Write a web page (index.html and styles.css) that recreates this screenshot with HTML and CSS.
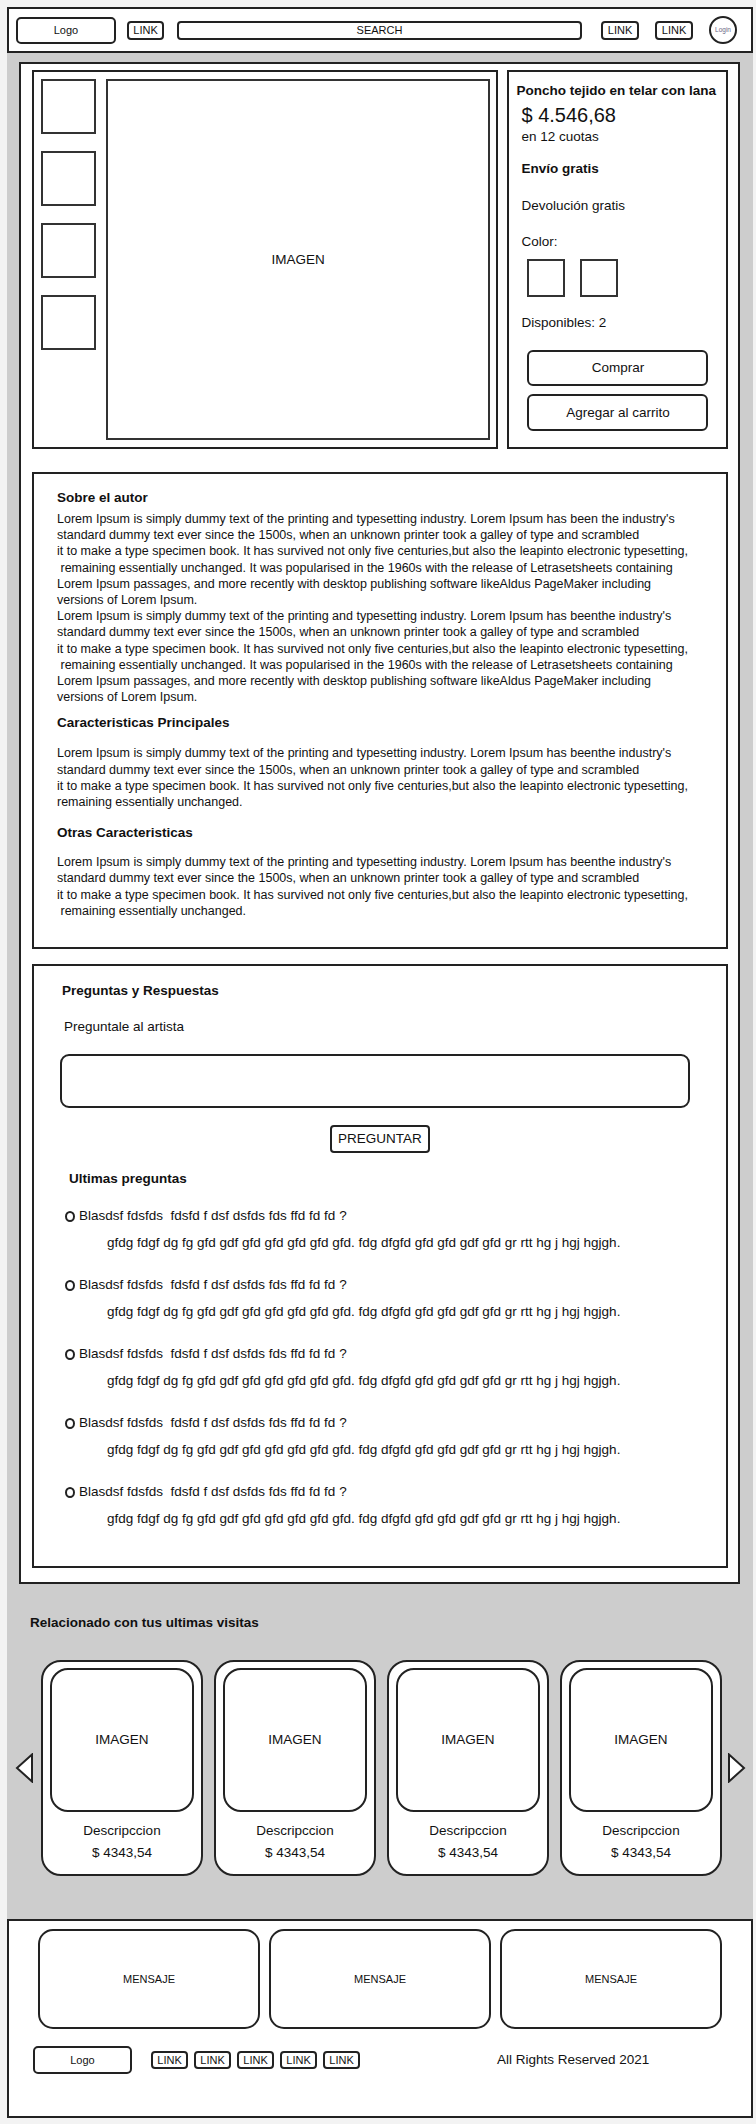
FILE: index.html
```html
<!DOCTYPE html>
<html lang="es">
<head>
<meta charset="utf-8">
<title>Poncho tejido en telar con lana</title>
<link rel="stylesheet" href="styles.css">
</head>
<body>
<div class="page">
  <header class="header">
    <div class="box logo">Logo</div>
    <div class="box hlink first">LINK</div>
    <div class="box search">SEARCH</div>
    <div class="box hlink">LINK</div>
    <div class="box hlink">LINK</div>
    <div class="login">Login</div>
  </header>

  <main class="main">
    <div class="wrapper">
      <section class="product-row">
        <div class="gallery">
          <div class="thumbs">
            <div class="thumb"></div>
            <div class="thumb"></div>
            <div class="thumb"></div>
            <div class="thumb"></div>
          </div>
          <div class="main-image">IMAGEN</div>
        </div>
        <div class="info">
          <div class="title">Poncho tejido en telar con lana</div>
          <div class="price">$ 4.546,68</div>
          <div class="cuotas">en 12 cuotas</div>
          <div class="envio">Envío gratis</div>
          <div class="devol">Devolución gratis</div>
          <div class="color-label">Color:</div>
          <div class="swatches">
            <div class="swatch"></div>
            <div class="swatch"></div>
          </div>
          <div class="stock">Disponibles: 2</div>
          <div class="btn buy">Comprar</div>
          <div class="btn cart">Agregar al carrito</div>
        </div>
      </section>

      <section class="desc">
        <div class="h h-first">Sobre el autor</div>
        <p class="body body-first">Lorem Ipsum is simply dummy text of the printing and typesetting industry. Lorem Ipsum has been the industry's<br>standard dummy text ever since the 1500s, when an unknown printer took a galley of type and scrambled<br>it to make a type specimen book. It has survived not only five centuries,but also the leapinto electronic typesetting,<br>&nbsp;remaining essentially unchanged. It was popularised in the 1960s with the release of Letrasetsheets containing<br>Lorem Ipsum passages, and more recently with desktop publishing software likeAldus PageMaker including<br>versions of Lorem Ipsum.<br>Lorem Ipsum is simply dummy text of the printing and typesetting industry. Lorem Ipsum has beenthe industry's<br>standard dummy text ever since the 1500s, when an unknown printer took a galley of type and scrambled<br>it to make a type specimen book. It has survived not only five centuries,but also the leapinto electronic typesetting,<br>&nbsp;remaining essentially unchanged. It was popularised in the 1960s with the release of Letrasetsheets containing<br>Lorem Ipsum passages, and more recently with desktop publishing software likeAldus PageMaker including<br>versions of Lorem Ipsum.</p>
        <div class="h h-second">Caracteristicas Principales</div>
        <p class="body body-second">Lorem Ipsum is simply dummy text of the printing and typesetting industry. Lorem Ipsum has beenthe industry's<br>standard dummy text ever since the 1500s, when an unknown printer took a galley of type and scrambled<br>it to make a type specimen book. It has survived not only five centuries,but also the leapinto electronic typesetting,<br>remaining essentially unchanged.</p>
        <div class="h h-third">Otras Caracteristicas</div>
        <p class="body body-third">Lorem Ipsum is simply dummy text of the printing and typesetting industry. Lorem Ipsum has beenthe industry's<br>standard dummy text ever since the 1500s, when an unknown printer took a galley of type and scrambled<br>it to make a type specimen book. It has survived not only five centuries,but also the leapinto electronic typesetting,<br>&nbsp;remaining essentially unchanged.</p>
      </section>

      <section class="qa">
        <div class="qa-title">Preguntas y Respuestas</div>
        <div class="qa-ask">Preguntale al artista</div>
        <div class="qa-input"></div>
        <div class="qa-btn">PREGUNTAR</div>
        <div class="qa-last">Ultimas preguntas</div>
        <div class="qa-list">
          <div class="q"><span class="dot"></span>Blasdsf fdsfds  fdsfd f dsf dsfds fds ffd fd fd ?</div>
          <div class="a">gfdg fdgf dg fg gfd gdf gfd gfd gfd gfd gfd. fdg dfgfd gfd gfd gdf gfd gr rtt hg j hgj hgjgh.</div>
          <div class="q"><span class="dot"></span>Blasdsf fdsfds  fdsfd f dsf dsfds fds ffd fd fd ?</div>
          <div class="a">gfdg fdgf dg fg gfd gdf gfd gfd gfd gfd gfd. fdg dfgfd gfd gfd gdf gfd gr rtt hg j hgj hgjgh.</div>
          <div class="q"><span class="dot"></span>Blasdsf fdsfds  fdsfd f dsf dsfds fds ffd fd fd ?</div>
          <div class="a">gfdg fdgf dg fg gfd gdf gfd gfd gfd gfd gfd. fdg dfgfd gfd gfd gdf gfd gr rtt hg j hgj hgjgh.</div>
          <div class="q"><span class="dot"></span>Blasdsf fdsfds  fdsfd f dsf dsfds fds ffd fd fd ?</div>
          <div class="a">gfdg fdgf dg fg gfd gdf gfd gfd gfd gfd gfd. fdg dfgfd gfd gfd gdf gfd gr rtt hg j hgj hgjgh.</div>
          <div class="q"><span class="dot"></span>Blasdsf fdsfds  fdsfd f dsf dsfds fds ffd fd fd ?</div>
          <div class="a">gfdg fdgf dg fg gfd gdf gfd gfd gfd gfd gfd. fdg dfgfd gfd gfd gdf gfd gr rtt hg j hgj hgjgh.</div>
        </div>
      </section>
    </div>

    <section class="related">
      <div class="related-title">Relacionado con tus ultimas visitas</div>
      <div class="carousel">
        <svg class="arrow" viewBox="0 0 19 30" width="19" height="30"><polygon points="17,1.5 17,28.5 2,15" fill="#fff" stroke="#222" stroke-width="2" stroke-linejoin="miter"/></svg>
        <div class="cards">
          <div class="card"><div class="card-img">IMAGEN</div><div class="card-desc">Descripccion</div><div class="card-price">$ 4343,54</div></div>
          <div class="card"><div class="card-img">IMAGEN</div><div class="card-desc">Descripccion</div><div class="card-price">$ 4343,54</div></div>
          <div class="card"><div class="card-img">IMAGEN</div><div class="card-desc">Descripccion</div><div class="card-price">$ 4343,54</div></div>
          <div class="card"><div class="card-img">IMAGEN</div><div class="card-desc">Descripccion</div><div class="card-price">$ 4343,54</div></div>
        </div>
        <svg class="arrow" viewBox="0 0 19 30" width="19" height="30"><polygon points="2,1.5 2,28.5 17,15" fill="#fff" stroke="#222" stroke-width="2" stroke-linejoin="miter"/></svg>
      </div>
    </section>
  </main>

  <footer class="footer">
    <div class="messages">
      <div class="msg">MENSAJE</div>
      <div class="msg">MENSAJE</div>
      <div class="msg">MENSAJE</div>
    </div>
    <div class="foot-row">
      <div class="box flogo">Logo</div>
      <div class="flinks">
        <div class="box flink">LINK</div>
        <div class="box flink">LINK</div>
        <div class="box flink">LINK</div>
        <div class="box flink">LINK</div>
        <div class="box flink">LINK</div>
      </div>
      <div class="rights">All Rights Reserved 2021</div>
    </div>
  </footer>
</div>
</body>
</html>
```

FILE: styles.css
```css
* { box-sizing: border-box; }

html, body {
  margin: 0;
  padding: 0;
}

body {
  background: #f3f3f3;
  font-family: "Liberation Sans", Arial, sans-serif;
  color: #111;
  font-size: 13.5px;
  line-height: 16px;
}

.page {
  width: 746px;
  margin: 7px 0 0 7px;
}

/* ---------- header ---------- */
.header {
  height: 46px;
  background: #fff;
  border: 2px solid #222;
  display: flex;
  align-items: center;
  padding-left: 7px;
}

.box {
  border: 2px solid #222;
  border-radius: 4px;
  background: #fff;
  display: flex;
  align-items: center;
  justify-content: center;
  font-size: 11px;
  line-height: 12px;
}

.logo {
  width: 100px;
  height: 27px;
  margin-right: 11px;
  border-radius: 5px;
}

.hlink {
  width: 38px;
  height: 19px;
  margin-right: 16px;
}

.hlink.first {
  width: 37px;
  margin-right: 13px;
}

.search {
  width: 405px;
  height: 19px;
  margin-right: 19px;
}

.login {
  width: 28px;
  height: 28px;
  border: 2px solid #222;
  border-radius: 50%;
  font-size: 6.5px;
  color: #6c6888;
  display: flex;
  align-items: center;
  justify-content: center;
}

/* ---------- main gray area ---------- */
.main {
  background: #cdcdcd;
  padding: 9px 13px 43px 12px;
}

.wrapper {
  background: #fff;
  border: 2px solid #222;
  padding: 6px 10px 14px 11px;
}

/* product */
.product-row {
  display: flex;
  gap: 9px;
}

.gallery {
  width: 470px;
  border: 2px solid #222;
  padding: 7px 6px 7px 7px;
  display: flex;
  gap: 10px;
}

.thumbs {
  display: flex;
  flex-direction: column;
  gap: 17px;
}

.thumb {
  width: 55px;
  height: 55px;
  border: 2px solid #333;
}

.main-image {
  flex: 1;
  height: 361px;
  border: 2px solid #333;
  display: flex;
  align-items: center;
  justify-content: center;
}

.info {
  flex: 1;
  border: 2px solid #222;
  padding: 11px 10px 0 12px;
}

.title {
  font-weight: bold;
  margin-left: -5px;
  white-space: nowrap;
}

.price {
  font-size: 20px;
  line-height: 23px;
  margin-top: 5px;
}

.cuotas {
  margin-top: 2px;
}

.envio {
  font-weight: bold;
  margin-top: 16px;
}

.devol {
  margin-top: 21px;
}

.color-label {
  margin-top: 20px;
}

.swatches {
  display: flex;
  gap: 15px;
  margin-top: 9px;
  margin-left: 6px;
}

.swatch {
  width: 38px;
  height: 38px;
  border: 2px solid #333;
}

.stock {
  margin-top: 18px;
}

.btn {
  width: 181px;
  margin-left: 6px;
  border: 2px solid #222;
  border-radius: 6px;
  display: flex;
  align-items: center;
  justify-content: center;
}

.buy {
  height: 36px;
  margin-top: 19px;
}

.cart {
  height: 37px;
  margin-top: 8px;
}

/* description */
.desc {
  margin-top: 23px;
  border: 2px solid #222;
  padding: 16px 10px 28px 23px;
}

.h {
  font-weight: bold;
}

.body {
  margin: 0;
  font-size: 12.5px;
  line-height: 16.2px;
  white-space: nowrap;
}

.body-first { margin-top: 5px; }
.h-second { margin-top: 10px; }
.body-second { margin-top: 14px; }
.h-third { margin-top: 15px; }
.body-third { margin-top: 13px; }

/* questions */
.qa {
  margin-top: 15px;
  border: 2px solid #222;
  padding: 17px 10px 39px 26px;
}

.qa-title {
  font-weight: bold;
  margin-left: 2px;
}

.qa-ask {
  margin-top: 20px;
  margin-left: 4px;
}

.qa-input {
  margin-top: 19px;
  width: 630px;
  height: 54px;
  border: 2px solid #222;
  border-radius: 9px;
}

.qa-btn {
  margin-top: 17px;
  margin-left: 270px;
  width: 100px;
  height: 28px;
  border: 2px solid #222;
  border-radius: 4px;
  display: flex;
  align-items: center;
  justify-content: center;
  font-size: 13.5px;
}

.qa-last {
  margin-top: 18px;
  margin-left: 9px;
  font-weight: bold;
}

.qa-list {
  margin-top: 21px;
}

.q {
  white-space: pre;
  margin-left: 5px;
  display: flex;
  align-items: center;
}

.dot {
  width: 10px;
  height: 11px;
  border: 2px solid #222;
  border-radius: 50%;
  margin-right: 4px;
  flex: none;
}

.a {
  margin-top: 11px;
  margin-left: 47px;
  margin-bottom: 26px;
}

.a:last-child {
  margin-bottom: 0;
}

/* related */
.related {
  margin-top: 31px;
}

.related-title {
  font-weight: bold;
  margin-left: 11px;
}

.carousel {
  margin-top: 29px;
  margin-left: -4px;
  display: flex;
  align-items: center;
  gap: 7px;
}

.arrow {
  flex: none;
  display: block;
}

.carousel .arrow:last-child {
  margin-left: -2px;
}

.cards {
  display: flex;
  gap: 11px;
}

.card {
  width: 162px;
  height: 216px;
  border: 2px solid #222;
  border-radius: 20px;
  background: #fff;
  padding-top: 6px;
  display: flex;
  flex-direction: column;
  align-items: center;
}

.card-img {
  width: 144px;
  height: 144px;
  border: 2px solid #222;
  border-radius: 18px;
  display: flex;
  align-items: center;
  justify-content: center;
}

.card-desc {
  margin-top: 11px;
}

.card-price {
  margin-top: 6px;
}

/* footer */
.footer {
  height: 199px;
  background: #fff;
  border: 2px solid #222;
  padding: 8px 28px 0 24px;
}

.messages {
  display: flex;
  gap: 9px;
  margin-left: 5px;
}

.msg {
  width: 222px;
  height: 100px;
  border: 2px solid #222;
  border-radius: 15px;
  display: flex;
  align-items: center;
  justify-content: center;
  font-size: 11px;
}

.foot-row {
  margin-top: 17px;
  display: flex;
  align-items: center;
}

.flogo {
  width: 99px;
  height: 28px;
  border-radius: 5px;
}

.flinks {
  display: flex;
  gap: 6px;
  margin-left: 19px;
}

.flink {
  width: 37px;
  height: 18px;
}

.rights {
  margin-left: 137px;
}
```
